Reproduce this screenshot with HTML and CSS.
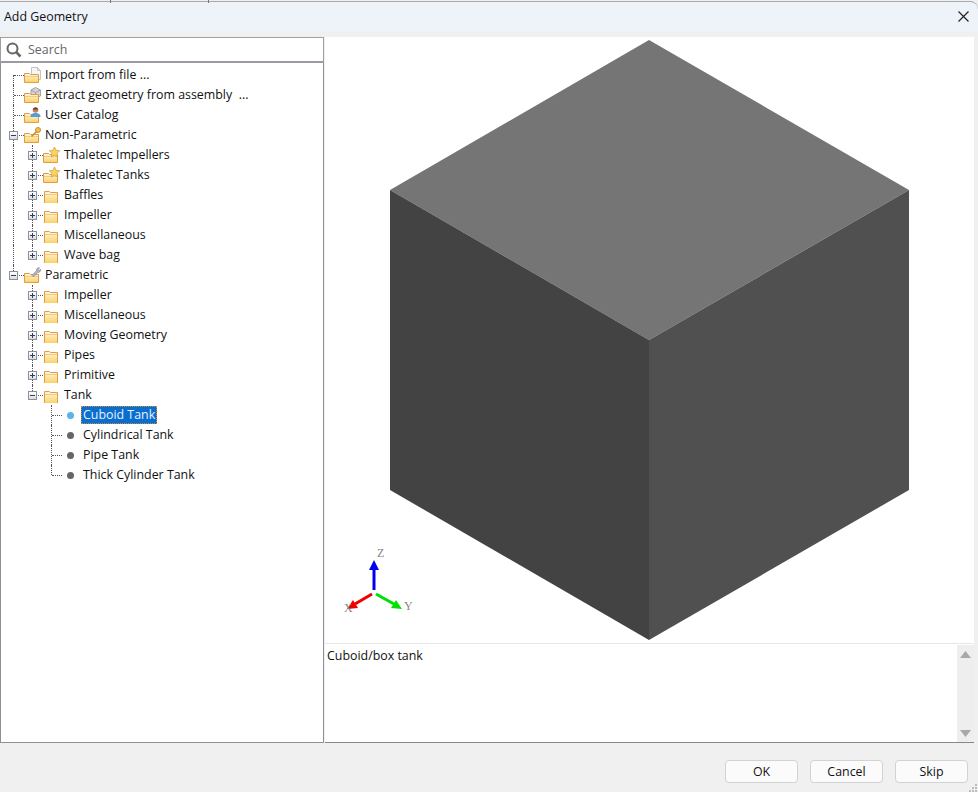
FILE: index.html
```html
<!DOCTYPE html>
<html lang="en">
<head>
  <meta charset="UTF-8" />
  <title>Add Geometry</title>
  <link rel="stylesheet" href="styles.css">
</head>
<body>
  <svg class="defs" width="0" height="0">
    <defs>
      <linearGradient id="fold" x1="0" y1="0" x2="0" y2="1">
        <stop offset="0" stop-color="#fff8e0"/>
        <stop offset="1" stop-color="#f8d163"/>
      </linearGradient>
      <symbol id="folder" viewBox="0 0 16 16">
        <path d="M1.500 16.500V4.500h5l1 1h7v11z" fill="url(#fold)" stroke="#e39b45"/>
        <path d="M2 7.500h12" stroke="#f3c98a"/>
      </symbol>
      <symbol id="folder-sm" viewBox="0 0 16 16">
        <path d="M.5 15.500V6.500h5l1 1h8v8z" fill="url(#fold)" stroke="#e39b45"/>
        <path d="M1 9.500h13" stroke="#f3c98a"/>
      </symbol>
      <symbol id="star" viewBox="0 0 11 13">
        <path d="M5.500 0l1.600 3.400 3.600.4-2.700 2.500.8 3.700-3.300-1.900-3.300 1.900.8-3.700L.3 3.800l3.600-.4z" fill="#f7d560" stroke="#d09a30" stroke-width=".7"/>
      </symbol>
    </defs>
  </svg>

  <header class="titlebar">
    <span class="tick tick-a"></span>
    <span class="tick tick-b"></span>
    <span class="title">Add Geometry</span>
    <svg class="close" width="11" height="11" viewBox="0 0 11 11"><path d="M.5.500l10 10M10.500.500l-10 10" stroke="#222" stroke-width="1.200"/></svg>
  </header>

  <main class="main">
    <section class="left">
      <div class="search">
        <svg width="16" height="16" viewBox="0 0 16 16"><circle cx="6.500" cy="6.500" r="5" fill="none" stroke="#666" stroke-width="2"/><path d="M10.200 10.200l4.300 4.300" stroke="#666" stroke-width="2.600"/></svg>
        <span>Search</span>
      </div>
      <div class="tree">
        <div class="row"><span class="g first"></span><span class="ico"><svg class="badge" viewBox="0 0 11 13"><path d="M1.500.5h6l3 3v9h-9z" fill="#f6f6f6" stroke="#c4c4c4"/><path d="M7.500.5v3h3" fill="none" stroke="#c4c4c4"/></svg><svg viewBox="0 0 16 16"><use href="#folder-sm"/></svg></span><span class="label">Import from file ...</span></div>
        <div class="row"><span class="g t"></span><span class="ico"><svg class="badge" viewBox="0 0 11 13"><path d="M1 3l4.500-2.500L10.500 3v6l-5 3-4.500-3z" fill="#d4d4d8" stroke="#a2a2a8"/><path d="M1 3l4.500 2.500L10.500 3M5.500 5.500V12" fill="none" stroke="#a2a2a8"/></svg><svg viewBox="0 0 16 16"><use href="#folder-sm"/></svg></span><span class="label">Extract geometry from assembly &nbsp;...</span></div>
        <div class="row"><span class="g t"></span><span class="ico"><svg viewBox="0 0 16 16"><use href="#folder-sm"/></svg><svg class="badge" viewBox="0 0 11 13"><circle cx="5.500" cy="3" r="2.800" fill="#c08058"/><path d="M2.800 2.500a2.800 2.800 0 0 1 5.400 0z" fill="#6b3a24"/><path d="M.5 10c0-3 2-4 5-4s5 1 5 4z" fill="#4f9fdc"/></svg></span><span class="label">User Catalog</span></div>
        <div class="row"><span class="g t"><i class="exp minus"></i></span><span class="ico"><svg viewBox="0 0 16 16"><use href="#folder-sm"/></svg><svg class="badge" viewBox="0 0 11 13"><circle cx="8" cy="3" r="2.500" fill="#f2c14e" stroke="#c98f2a"/><path d="M6.500 4.500l-5 5" stroke="#c98f2a" stroke-width="1.600"/></svg></span><span class="label">Non-Parametric</span></div>

        <div class="row"><span class="g v"></span><span class="g t"><i class="exp plus"></i></span><span class="ico"><svg viewBox="0 0 16 16"><use href="#folder-sm"/></svg><svg class="badge" viewBox="0 0 11 13"><use href="#star"/></svg></span><span class="label">Thaletec Impellers</span></div>
        <div class="row"><span class="g v"></span><span class="g t"><i class="exp plus"></i></span><span class="ico"><svg viewBox="0 0 16 16"><use href="#folder-sm"/></svg><svg class="badge" viewBox="0 0 11 13"><use href="#star"/></svg></span><span class="label">Thaletec Tanks</span></div>
        <div class="row"><span class="g v"></span><span class="g t"><i class="exp plus"></i></span><span class="ico"><svg viewBox="0 0 16 16"><use href="#folder"/></svg></span><span class="label">Baffles</span></div>
        <div class="row"><span class="g v"></span><span class="g t"><i class="exp plus"></i></span><span class="ico"><svg viewBox="0 0 16 16"><use href="#folder"/></svg></span><span class="label">Impeller</span></div>
        <div class="row"><span class="g v"></span><span class="g t"><i class="exp plus"></i></span><span class="ico"><svg viewBox="0 0 16 16"><use href="#folder"/></svg></span><span class="label">Miscellaneous</span></div>
        <div class="row"><span class="g v"></span><span class="g l"><i class="exp plus"></i></span><span class="ico"><svg viewBox="0 0 16 16"><use href="#folder"/></svg></span><span class="label">Wave bag</span></div>

        <div class="row"><span class="g l"><i class="exp minus"></i></span><span class="ico"><svg viewBox="0 0 16 16"><use href="#folder-sm"/></svg><svg class="badge" viewBox="0 0 11 13"><path d="M9.500 .8a2.500 2.500 0 0 0-3 3L2 8.300l1.500 1.500L8 5.300a2.500 2.500 0 0 0 2.700-3L9 3.800 8 2.800z" fill="#b4b8c0" stroke="#7c8290" stroke-width=".7"/></svg></span><span class="label">Parametric</span></div>

        <div class="row"><span class="g"></span><span class="g t"><i class="exp plus"></i></span><span class="ico"><svg viewBox="0 0 16 16"><use href="#folder"/></svg></span><span class="label">Impeller</span></div>
        <div class="row"><span class="g"></span><span class="g t"><i class="exp plus"></i></span><span class="ico"><svg viewBox="0 0 16 16"><use href="#folder"/></svg></span><span class="label">Miscellaneous</span></div>
        <div class="row"><span class="g"></span><span class="g t"><i class="exp plus"></i></span><span class="ico"><svg viewBox="0 0 16 16"><use href="#folder"/></svg></span><span class="label">Moving Geometry</span></div>
        <div class="row"><span class="g"></span><span class="g t"><i class="exp plus"></i></span><span class="ico"><svg viewBox="0 0 16 16"><use href="#folder"/></svg></span><span class="label">Pipes</span></div>
        <div class="row"><span class="g"></span><span class="g t"><i class="exp plus"></i></span><span class="ico"><svg viewBox="0 0 16 16"><use href="#folder"/></svg></span><span class="label">Primitive</span></div>
        <div class="row"><span class="g"></span><span class="g l"><i class="exp minus"></i></span><span class="ico"><svg viewBox="0 0 16 16"><use href="#folder"/></svg></span><span class="label">Tank</span></div>

        <div class="row"><span class="g"></span><span class="g"></span><span class="g t"></span><span class="ico dot-wrap"><i class="dot on"></i></span><span class="label selected">Cuboid Tank</span></div>
        <div class="row"><span class="g"></span><span class="g"></span><span class="g t"></span><span class="ico dot-wrap"><i class="dot"></i></span><span class="label">Cylindrical Tank</span></div>
        <div class="row"><span class="g"></span><span class="g"></span><span class="g t"></span><span class="ico dot-wrap"><i class="dot"></i></span><span class="label">Pipe Tank</span></div>
        <div class="row"><span class="g"></span><span class="g"></span><span class="g l"></span><span class="ico dot-wrap"><i class="dot"></i></span><span class="label">Thick Cylinder Tank</span></div>
      </div>
    </section>

    <section class="right">
      <svg class="viewer" width="649" height="606" viewBox="325 37 649 606">
        <polygon points="649,40 909,190 649,340 390,190" fill="#757575"/>
        <polygon points="390,190 649,340 649,640 390,490" fill="#434343"/>
        <polygon points="649,340 909,190 909,490 649,640" fill="#505050"/>
        <path d="M374 590V568" stroke="#0000f0" stroke-width="3"/>
        <path d="M374 560l-5 10h10z" fill="#0000f0"/>
        <path d="M372 594l-17 10" stroke="#f00000" stroke-width="3"/>
        <path d="M347 609l6-9 5 8z" fill="#f00000"/>
        <path d="M376 594l18 10" stroke="#00e000" stroke-width="3"/>
        <path d="M402 609l-11-1 5-8z" fill="#00e000"/>
        <text class="axis" x="377" y="557">Z</text>
        <text class="axis" x="404" y="610">Y</text>
        <text class="axis" x="344" y="612">X</text>
      </svg>
      <div class="desc">
        <p>Cuboid/box tank</p>
        <div class="scroll">
          <svg width="11" height="7" viewBox="0 0 11 7"><path d="M5.500 0l5.500 7H0z" fill="#a8a8a8"/></svg>
          <svg width="11" height="7" viewBox="0 0 11 7"><path d="M0 0h11L5.500 7z" fill="#a8a8a8"/></svg>
        </div>
      </div>
    </section>
  </main>

  <footer class="actions">
    <button>OK</button>
    <button>Cancel</button>
    <button>Skip</button>
    <svg class="grip" width="10" height="8" viewBox="0 0 10 8"><path d="M7 0h2v2H7zM4 3h2v2H4zM7 3h2v2H7zM1 6h2v2H1zM4 6h2v2H4zM7 6h2v2H7z" fill="#bdbdbd"/></svg>
  </footer>
</body>
</html>
```

FILE: styles.css
```css
* {
  box-sizing: border-box;
}
body {
  display: flex;
  flex-direction: column;
  width: 978px;
  height: 792px;
  margin: 0;
  overflow: hidden;
  background-color: #f0f0f0;
  font-family: "Open Sans", "Noto Sans", sans-serif;
  font-size: 12.4px;
  color: #111;
}
.defs {
  position: absolute;
}
.titlebar {
  position: relative;
  display: flex;
  align-items: center;
  justify-content: space-between;
  flex: none;
  height: 31px;
  padding: 0 9px 1px 4px;
  margin-top: 1px;
  background-color: #eef2f9;
  border-top: 1px solid #a9a9a9;
  border-top-right-radius: 8px;
}
.tick {
  position: absolute;
  top: -2px;
  width: 1px;
  height: 3px;
  background-color: #777;
}
.tick-a {
  left: 110px;
}
.tick-b {
  left: 208px;
}
.main {
  display: flex;
  flex: none;
  height: 706px;
  margin-top: 5px;
}
.left {
  display: flex;
  flex-direction: column;
  width: 324px;
  flex: none;
}
.search {
  display: flex;
  align-items: center;
  gap: 6px;
  flex: none;
  height: 26px;
  padding-left: 5px;
  background-color: white;
  border: 1px solid #a0a0a0;
  border-bottom: 2px solid #9a9aa2;
  color: #666;
}
.tree {
  flex: 1;
  padding: 2px 0 0 3px;
  background-color: white;
  border: 1px solid #8f8f98;
  border-top: none;
}
.row {
  display: flex;
  align-items: center;
  height: 20px;
}
.g {
  position: relative;
  display: block;
  flex: none;
  width: 19px;
  height: 20px;
}
.g.v::before,
.g.t::before,
.g.l::before,
.g.first::before {
  content: "";
  position: absolute;
  left: 9px;
  top: 0;
  height: 100%;
  border-left: 1px dotted #555;
}
.g.l::before {
  height: 10px;
}
.g.first::before {
  top: 10px;
  height: 10px;
}
.g.t::after,
.g.l::after,
.g.first::after {
  content: "";
  position: absolute;
  left: 10px;
  top: 10px;
  width: 10px;
  border-top: 1px dotted #555;
}
.exp {
  position: absolute;
  z-index: 1;
  left: 5px;
  top: 6px;
  width: 9px;
  height: 9px;
  background: linear-gradient(#fff, #dcdcdc);
  border: 1px solid #8b919c;
}
.exp::before {
  content: "";
  position: absolute;
  left: 1px;
  top: 3px;
  width: 5px;
  height: 1px;
  background-color: #2a3f6a;
}
.exp.plus::after {
  content: "";
  position: absolute;
  left: 3px;
  top: 1px;
  width: 1px;
  height: 5px;
  background-color: #2a3f6a;
}
.ico {
  position: relative;
  display: block;
  flex: none;
  width: 16px;
  height: 16px;
  margin-left: 1px;
  margin-right: 3px;
}
.ico > svg {
  position: relative;
  display: block;
  width: 16px;
  height: 16px;
  overflow: visible;
}
.ico > .badge {
  position: absolute;
  left: 6px;
  top: 0;
  width: 11px;
  height: 13px;
}
.dot-wrap {
  display: flex;
  align-items: center;
  justify-content: center;
}
.dot {
  display: block;
  width: 7px;
  height: 7px;
  border-radius: 50%;
  background-color: #666;
}
.dot.on {
  background-color: #5ab3ea;
}
.label {
  padding: 1px 2px;
  white-space: nowrap;
  line-height: 16px;
}
.label.selected {
  background-color: #0a6ecf;
  color: #e6f2ff;
  outline: 1px dotted #d08a30;
  outline-offset: -1px;
}
.right {
  display: flex;
  flex-direction: column;
  flex: none;
  width: 649px;
  margin-left: 1px;
}
.viewer {
  display: block;
  flex: none;
  background-color: white;
}
.axis {
  font-family: "Liberation Serif", serif;
  font-size: 12px;
  fill: #888;
}
.desc {
  display: flex;
  flex: 1;
  background-color: white;
  border-top: 1px solid #e6e6e6;
  border-bottom: 1px solid #888;
}
.desc p {
  flex: 1;
  margin: 0;
  padding: 4px 2px;
  line-height: 16px;
}
.scroll {
  display: flex;
  flex-direction: column;
  align-items: center;
  justify-content: space-between;
  width: 17px;
  margin-top: 1px;
  padding: 6px 0 5px;
  background-color: #eeeeee;
}
.actions {
  position: relative;
  display: flex;
  flex: 1;
  justify-content: flex-end;
  gap: 12px;
  padding: 17px 10px 0 0;
}
.actions button {
  width: 73px;
  height: 23px;
  padding: 0;
  background-color: #fbfbfb;
  border: 1px solid #d2d2d2;
  border-radius: 4px;
  font-family: inherit;
  font-size: 12.4px;
  color: #111;
}
.grip {
  position: absolute;
  right: 0;
  bottom: 0;
}
```
